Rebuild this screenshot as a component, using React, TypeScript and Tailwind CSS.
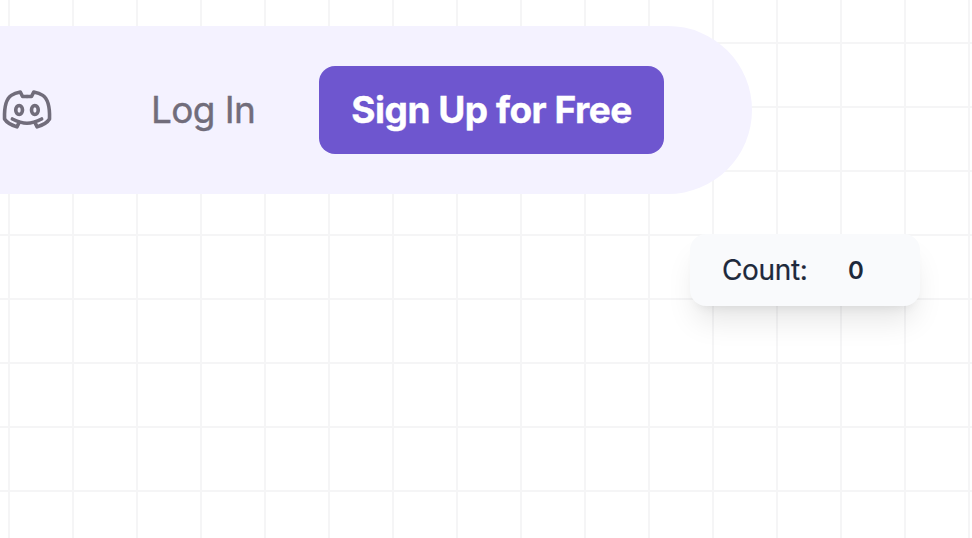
function DiscordIcon() {
  return (
    <svg className="size-[54px] shrink-0" viewBox="0 0 24 24" fill="none" stroke="currentColor" strokeWidth="1.6" strokeLinecap="round" strokeLinejoin="round">
      <path d="M5.5 16c5 2.5 8 2.5 13 0" />
      <path d="M15.5 17.5l1 2s4.171-1.328 5.5-3.5c0-1 .53-8.147-3-10.5C17.5 4.5 15 4 15 4l-1 2h-2" />
      <path d="M8.528 17.5l-1 2s-4.171-1.328-5.5-3.5c0-1-.53-8.147 3-10.5 1.5-1 4-1.5 4-1.5l1 2h2" />
      <path d="M8.5 14c-.828 0-1.5-.895-1.5-2s.672-2 1.5-2 1.5.895 1.5 2-.672 2-1.5 2zM15.5 14c-.828 0-1.5-.895-1.5-2s.672-2 1.5-2 1.5.895 1.5 2-.672 2-1.5 2z" />
    </svg>
  );
}

export default function App() {
  return (
    <div className="flex h-[538px] w-[972px] flex-col items-start gap-10 overflow-hidden bg-white bg-[linear-gradient(to_right,#f5f5f6_2px,transparent_2px),linear-gradient(to_bottom,#f5f5f6_2px,transparent_2px)] bg-[size:64px_64px] bg-[position:8px_42px] pt-[26px] font-['Inter',sans-serif] antialiased">
      <nav className="flex h-[168px] w-[752px] items-center rounded-r-full bg-[#f4f2ff] text-[#716d7b]">
        <DiscordIcon />
        <a className="ml-24 w-[169px] whitespace-nowrap pl-px text-[37px] tracking-[-0.017em] [-webkit-text-stroke:0.4px]">Log In</a>
        <button className="h-[88px] w-[345px] whitespace-nowrap rounded-2xl bg-[#6e56cf] text-[37px] font-bold tracking-[-0.013em] text-white [-webkit-text-stroke:0.4px]">
          Sign Up for Free
        </button>
      </nav>
      <div className="ml-[690px] flex h-[72px] w-[230px] items-center rounded-2xl bg-[#f9fafc] px-8 text-[#1e293b] shadow-[0_20px_30px_-6px_rgb(0_0_0/0.1),0_8px_12px_-8px_rgb(0_0_0/0.1)]">
        <span className="w-[126px] text-[28px] tracking-[-0.012em] [-webkit-text-stroke:0.2px]">Count:</span>
        <span className="pt-0.5 text-2xl font-semibold">0</span>
      </div>
    </div>
  );
}
